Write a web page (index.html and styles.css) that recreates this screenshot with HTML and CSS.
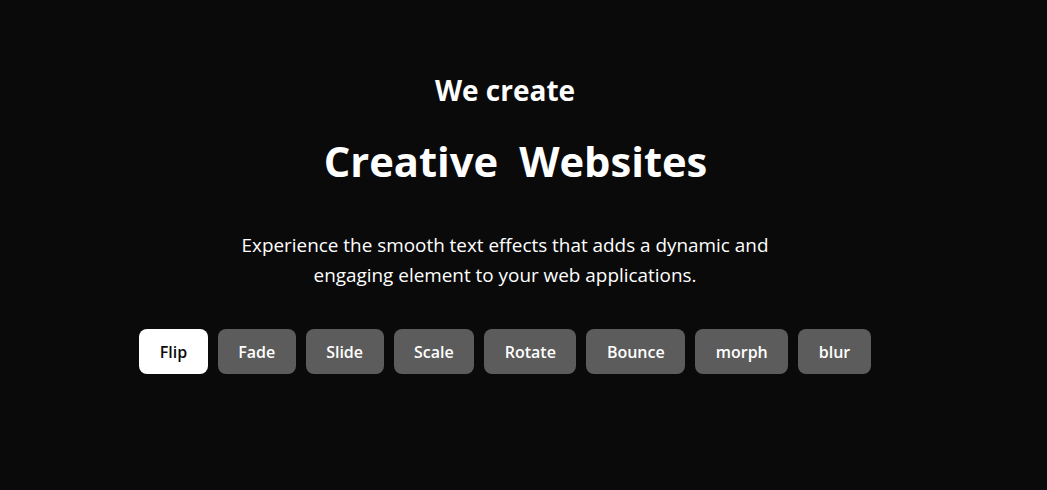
FILE: index.html
```html
<!DOCTYPE html>
<html lang="en">
<head>
<meta charset="utf-8">
<title>Text Effects</title>
<link rel="stylesheet" href="styles.css">
</head>
<body>
<main class="hero">
  <h2 class="eyebrow">We create</h2>
  <h1 class="title"><span class="word">Creative</span><span class="word">Websites</span></h1>
  <p class="lead">Experience the smooth text effects that adds a dynamic and<br>engaging element to your web applications.</p>
  <div class="effects">
    <button class="effect active">Flip</button>
    <button class="effect">Fade</button>
    <button class="effect">Slide</button>
    <button class="effect">Scale</button>
    <button class="effect">Rotate</button>
    <button class="effect">Bounce</button>
    <button class="effect">morph</button>
    <button class="effect">blur</button>
  </div>
</main>
</body>
</html>
```
FILE: styles.css
```css
html, body {
  margin: 0;
  padding: 0;
  background: #0a0a0a;
  color: #ffffff;
  font-family: "Open Sans", "Noto Sans", sans-serif;
}
.hero {
  width: 1010px;
  height: 490px;
  display: flex;
  flex-direction: column;
  align-items: center;
  padding-top: 71px;
  box-sizing: border-box;
}
.eyebrow {
  margin: 0;
  font-size: 28px;
  font-weight: 700;
  line-height: 38px;
}
.title {
  margin: 24px 0 0;
  font-size: 41.7px;
  font-weight: 700;
  line-height: 56px;
  display: flex;
}
.title .word {
  margin-left: 21px;
}
.lead {
  margin: 41px 0 0;
  font-size: 18.9px;
  line-height: 30px;
  text-align: center;
}
.effects {
  margin-top: 39px;
  display: flex;
  gap: 10px;
}
.effect {
  height: 45px;
  padding: 0 20.5px;
  border: none;
  border-radius: 8px;
  background: #5c5c5c;
  color: #ffffff;
  font-family: inherit;
  font-size: 16px;
  font-weight: 600;
}
.effect.active {
  background: #ffffff;
  color: #0a0a0a;
}
```
